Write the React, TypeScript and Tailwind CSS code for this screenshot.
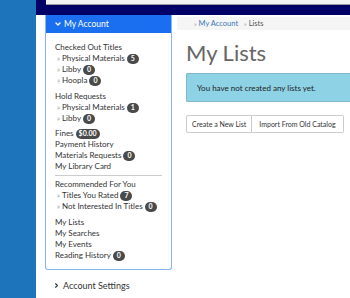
import { ChevronDown, ChevronRight } from 'lucide-react';

function Badge({ children }: { children: React.ReactNode }) {
  return (
    <span className="ml-[2px] inline-flex h-[10px] min-w-[12px] items-center justify-center rounded-full bg-[#4a4a4a] px-[3px] text-[7px] leading-none font-bold text-white">
      {children}
    </span>
  );
}

function SubItem({ label, count }: { label: string; count?: string }) {
  return (
    <div className="flex items-center pl-[2px] text-[#333]">
      <span className="mr-[2px] text-[7px] text-[#999]">»</span>
      {label}
      {count !== undefined && <Badge>{count}</Badge>}
    </div>
  );
}

function Item({ label, count }: { label: string; count?: string }) {
  return (
    <div className="flex items-center text-[#333]">
      {label}
      {count !== undefined && <Badge>{count}</Badge>}
    </div>
  );
}

export default function App() {
  return (
    <div
      className="flex h-[298px] w-[350px] overflow-hidden bg-white"
      style={{ fontFamily: 'Lato, "Open Sans", sans-serif' }}
    >
      {/* left blue strip */}
      <div className="h-full w-[36px] shrink-0 bg-[#1d74bb]" />

      <div className="flex min-w-0 flex-1 flex-col">
        {/* top bar */}
        <div className="flex h-[15px] shrink-0 bg-[#000066]">
          <div className="ml-[10px] h-[5px] flex-1 border-b border-[#999] bg-[#f2f2f2]" />
        </div>

        <div className="flex flex-1">
          {/* sidebar */}
          <div className="ml-[9px] w-[127px] shrink-0">
            <div className="rounded-b-[3px] border border-t-0 border-[#8ab4f8]">
              <div className="flex h-[18px] items-center bg-[#1a6ff0] pl-[8px] text-[8.5px] text-white">
                <ChevronDown className="mr-[2px] h-[8px] w-[8px]" strokeWidth={4} />
                My Account
              </div>
              <div className="px-[9px] pt-[9px] pb-[8px] text-[8px] leading-[11px]">
                <Item label="Checked Out Titles" />
                <SubItem label="Physical Materials" count="5" />
                <SubItem label="Libby" count="0" />
                <SubItem label="Hoopla" count="0" />
                <div className="mt-[5px]" />
                <Item label="Hold Requests" />
                <SubItem label="Physical Materials" count="1" />
                <SubItem label="Libby" count="0" />
                <div className="mt-[4px]" />
                <Item label="Fines" count="$0.00" />
                <Item label="Payment History" />
                <Item label="Materials Requests" count="0" />
                <Item label="My Library Card" />
                <div className="my-[3px] border-t border-[#ccc]" />
                <Item label="Recommended For You" />
                <SubItem label="Titles You Rated" count="7" />
                <SubItem label="Not Interested In Titles" count="0" />
                <div className="mt-[5px]" />
                <Item label="My Lists" />
                <Item label="My Searches" />
                <Item label="My Events" />
                <Item label="Reading History" count="0" />
              </div>
            </div>
            <div className="mt-[9px] flex items-center pl-[8px] text-[9px] text-[#333]">
              <ChevronRight className="mr-[3px] h-[7px] w-[7px]" strokeWidth={4} />
              Account Settings
            </div>
          </div>

          {/* main content */}
          <div className="ml-[5px] min-w-0 flex-1 pt-[2px]">
            <div className="flex h-[13px] items-center bg-[#f5f5f5] pl-[17px] text-[7.5px] text-[#3a78b8]">
              <span className="mr-[2px] text-[6px] text-[#999]">»</span>
              My Account
              <span className="mr-[2px] ml-[6px] text-[6px] text-[#999]">»</span>
              <span className="text-[#555]">Lists</span>
            </div>
            <div className="pl-[9px]">
              <h1 className="mt-[10px] text-[22px] leading-[26px] text-[#666]">My Lists</h1>
              <div className="mt-[7px] flex h-[29px] items-center rounded-l-[2px] border border-r-0 border-[#7fb8c8] bg-[#8ed2e6] pl-[10px] text-[8px] text-[#222]">
                You have not created any lists yet.
              </div>
              <div className="mt-[13px] flex">
                <button className="h-[18px] rounded-l-[2px] border border-[#ccc] bg-white px-[5px] text-[7px] text-[#333]">
                  Create a New List
                </button>
                <button className="h-[18px] rounded-r-[2px] border border-l-0 border-[#ccc] bg-white px-[7px] text-[7px] text-[#333]">
                  Import From Old Catalog
                </button>
              </div>
            </div>
          </div>
        </div>
      </div>
    </div>
  );
}
